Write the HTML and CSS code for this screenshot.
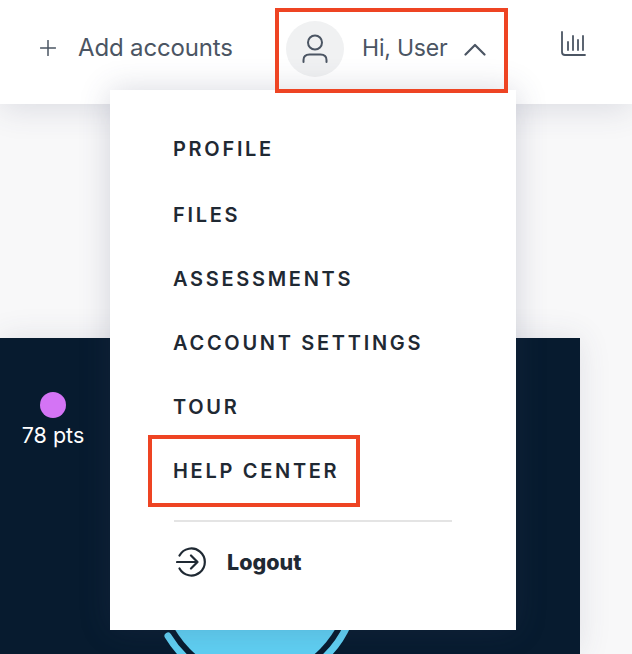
FILE: index.html
```html
<!DOCTYPE html>
<html lang="en">
<head>
    <meta charset="UTF-8">
    <meta name="viewport" content="width=device-width, initial-scale=1.0">
    <title>Account menu</title>
    <link rel="stylesheet" href="styles.css">
</head>
<body>
    <header class="topbar">
        <a class="add-accounts">
            <svg class="plus-icon" width="16" height="16" viewBox="0 0 16 16"><path d="M8 0.5V15.5M0.5 8H15.5"/></svg>
            <span>Add accounts</span>
        </a>
        <div class="user-toggle">
            <div class="avatar">
                <svg width="28" height="32" viewBox="0 0 28 32"><circle cx="14" cy="9.5" r="7"/><path d="M2.5 29V27C2.5 23.5 5 21.5 8.5 21.5H19.5C23 21.5 25.500 23.500 25.500 27V29"/></svg>
            </div>
            <span class="greeting">Hi, User</span>
            <svg class="chevron" width="22" height="13" viewBox="0 0 22 13"><path d="M1.500 11.500L11 2L20.500 11.500"/></svg>
        </div>
        <svg class="chart-icon" width="26" height="26" viewBox="0 0 26 26"><path d="M2 1V21C2 23 3 24 5 24H25M8 11V19M13 5V19M18 9V19M23 5V19"/></svg>
    </header>

    <main class="content">
        <section class="dark-panel">
            <div class="points">
                <span class="points-dot"></span>
                <span class="points-label">78 pts</span>
            </div>
            <svg class="badge" width="200" height="30" viewBox="0 0 200 30">
                <circle class="badge-fill" cx="95" cy="-40" r="92"/>
                <path class="badge-ring" d="M8 12A101.500 101.500 0 0 0 188 0"/>
            </svg>
        </section>
    </main>

    <nav class="dropdown">
        <ul class="menu-list">
            <li>PROFILE</li>
            <li>FILES</li>
            <li>ASSESSMENTS</li>
            <li>ACCOUNT SETTINGS</li>
            <li>TOUR</li>
            <li>HELP CENTER</li>
        </ul>
        <div class="logout">
            <svg width="32" height="30" viewBox="0 0 32 30"><path d="M3.500 8.500A13.500 13.500 0 1 1 3.500 21.500M1 15H21.500M15 8.500L21.500 15L15 21.500"/></svg>
            <span>Logout</span>
        </div>
    </nav>

    <div class="callout callout-user"></div>
    <div class="callout callout-help"></div>
</body>
</html>
```

FILE: styles.css
```css
* {
    box-sizing: border-box;
}
body {
    margin: 0;
    height: 654px;
    overflow: hidden;
    position: relative;
    font-family: "Inter", "Liberation Sans", sans-serif;
    background-color: #f8f8f9;
    color: #1f2933;
}
svg {
    fill: none;
    stroke: #4b5563;
    stroke-width: 2;
    stroke-linecap: round;
    stroke-linejoin: round;
}

.topbar {
    height: 104px;
    background-color: white;
    box-shadow: 0 6px 30px rgba(60,65,100,0.14);
    display: flex;
    align-items: center;
    padding-left: 40px;
    position: relative;
}
.add-accounts {
    display: flex;
    align-items: center;
    gap: 22px;
    width: 246px;
    margin-top: -9px;
    font-size: 24px;
    letter-spacing: -0.150px;
    color: #4b5563;
}
.plus-icon {
    stroke-width: 1.500;
}
.user-toggle {
    display: flex;
    align-items: center;
    margin-top: -6px;
    width: 274px;
    font-size: 23px;
    letter-spacing: -0.200px;
    color: #4b5563;
}
.avatar {
    width: 58px;
    height: 56px;
    border-radius: 50%;
    background-color: #f0f1f2;
    display: flex;
    align-items: center;
    justify-content: center;
    margin-right: 18px;
}
.greeting {
    margin-top: -3px;
}
.chevron {
    margin-left: 17px;
    stroke-width: 2.200;
}
.chart-icon {
    margin-top: -17px;
    stroke-width: 1.800;
}

.content {
    padding-top: 234px;
    height: 550px;
}
.dark-panel {
    width: 580px;
    height: 316px;
    background-color: #071b2f;
    position: relative;
    overflow: hidden;
    box-shadow: 0 0 30px rgba(60,65,100,0.12);
}
.points {
    display: flex;
    flex-direction: column;
    align-items: center;
    width: 106px;
    padding-top: 54px;
    color: white;
    font-size: 21.500px;
}
.points-dot {
    width: 26px;
    height: 26px;
    border-radius: 50%;
    background-color: #d474f5;
}
.points-label {
    margin-top: 4px;
}
.badge {
    position: absolute;
    left: 160px;
    bottom: 0;
}
.badge-ring {
    stroke: #5fcff2;
    stroke-width: 7;
}
.badge-fill {
    fill: #5fcff2;
    stroke: none;
}

.dropdown {
    position: absolute;
    left: 110px;
    top: 90px;
    width: 406px;
    height: 540px;
    background-color: white;
    box-shadow: 0 0 30px rgba(60,65,100,0.2);
    padding: 27px 64px 0 63px;
}
.menu-list {
    list-style: none;
    margin: 0 0 0 1px;
    padding: 0 0 17px;
    border-bottom: 2px solid #e4e4e4;
}
.menu-list li {
    height: 64px;
    line-height: 64px;
    margin-left: -1px;
    font-size: 20px;
    font-weight: 600;
    letter-spacing: 2.700px;
    color: #1f2933;
}
.menu-list li:first-child {
    margin-bottom: 2px;
}
.logout {
    display: flex;
    align-items: center;
    gap: 19px;
    margin-top: 25px;
    font-size: 21.500px;
    font-weight: 800;
}
.logout svg {
    margin-left: 3px;
    stroke: #1f2933;
    stroke-width: 2.200;
}

.callout {
    position: absolute;
    border: 4px solid #ee4423;
}
.callout-user {
    left: 275px;
    top: 8px;
    width: 233px;
    height: 85px;
}
.callout-help {
    left: 148px;
    top: 435px;
    width: 212px;
    height: 72px;
}
```
